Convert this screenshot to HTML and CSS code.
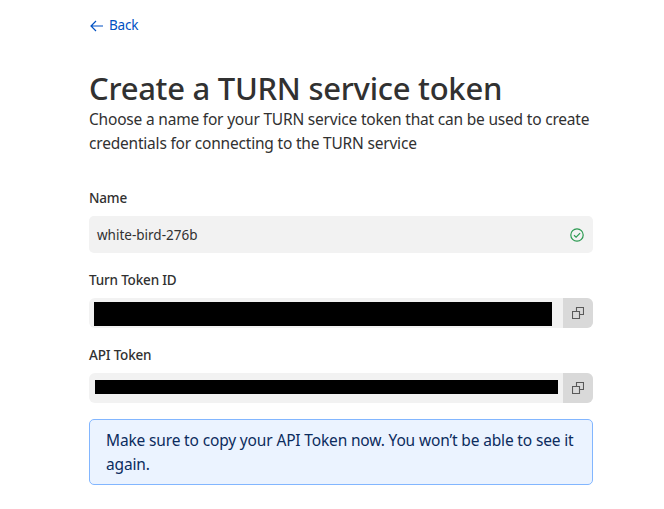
FILE: index.html
```html
<!DOCTYPE html>
<html lang="en">
<head>
  <meta charset="UTF-8" />
  <meta name="viewport" content="width=device-width, initial-scale=1.0"/>
  <title>Create a TURN service token</title>
  <link rel="stylesheet" href="styles.css">
</head>
<body>

  <main class="page">
    <a class="back" href="#">
      <svg width="14" height="12" viewBox="0 0 14 12" fill="none" stroke="currentColor" stroke-width="1.2">
        <path d="M6 1 1 6l5 5M1 6H13"/>
      </svg>
      <span>Back</span>
    </a>

    <h1>Create a TURN service token</h1>
    <p class="intro">
      Choose a name for your TURN service token that can be used to create<br>
      credentials for connecting to the TURN service
    </p>

    <!-- Name -->
    <div class="field field-name">
      <div class="label">Name</div>
      <div class="input">
        <span class="value">white-bird-276b</span>
        <svg class="check" width="14" height="14" viewBox="0 0 14 14" fill="none" stroke="currentColor" stroke-width="1.2">
          <circle cx="7" cy="7" r="6.2"/>
          <path d="M4 7.2 6.1 9.2 10.1 5.1"/>
        </svg>
      </div>
    </div>

    <!-- Token ID -->
    <div class="field field-id">
      <div class="label">Turn Token ID</div>
      <div class="secret">
        <div class="secret-value"><span class="mask mask-id"></span></div>
        <button class="copy" aria-label="Copy">
          <svg width="12" height="12" viewBox="0 0 12 12" fill="none" stroke="currentColor" stroke-width="1.1">
            <path d="M.5 4.5h7v7h-7zM4.5 4.5v-4h7v7h-4"/>
          </svg>
        </button>
      </div>
    </div>

    <!-- API Token -->
    <div class="field field-api">
      <div class="label">API Token</div>
      <div class="secret">
        <div class="secret-value"><span class="mask mask-api"></span></div>
        <button class="copy" aria-label="Copy">
          <svg width="12" height="12" viewBox="0 0 12 12" fill="none" stroke="currentColor" stroke-width="1.1">
            <path d="M.5 4.5h7v7h-7zM4.5 4.5v-4h7v7h-4"/>
          </svg>
        </button>
      </div>
    </div>

    <div class="notice">
      Make sure to copy your API Token now. You won’t be able to see it<br>
      again.
    </div>
  </main>

</body>
</html>
```

FILE: styles.css
```css
:root {
  --text: #313131;
  --link: #0051c3;
  --field-bg: #f2f2f2;
  --copy-bg: #d9d9d9;
  --notice-bg: #ebf3ff;
  --notice-border: #82b6ff;
  --notice-text: #0c2c5e;
}

* {
  margin: 0;
  padding: 0;
  box-sizing: border-box;
}

body {
  background: #fff;
  color: var(--text);
  font-family: "Segoe UI", "Noto Sans", "Open Sans", sans-serif;
  font-size: 15.5px;
  line-height: 24px;
}

.page {
  width: 504px;
  margin-left: 89px;
  padding-top: 16px;
}

.back {
  display: flex;
  align-items: center;
  gap: 5px;
  height: 20px;
  padding-left: 1px;
  font-size: 13.5px;
  line-height: 18px;
  letter-spacing: -0.2px;
  color: var(--link);
  text-decoration: none;
}

.back span {
  margin-top: -2px;
}

h1 {
  margin-top: 33px;
  font-size: 31px;
  font-weight: 550;
  line-height: 39px;
  letter-spacing: -0.27px;
  white-space: nowrap;
}

.intro {
  margin-top: -1px;
  letter-spacing: -0.2px;
  white-space: nowrap;
}

.label {
  font-size: 13.5px;
  font-weight: 550;
  line-height: 20px;
  letter-spacing: -0.18px;
}

.field-name {
  margin-top: 33px;
}

.field-id {
  margin-top: 17px;
}

.field-api {
  margin-top: 17px;
}

.input {
  display: flex;
  align-items: center;
  justify-content: space-between;
  height: 37px;
  margin-top: 8px;
  padding: 0 9px 0 8px;
  border-radius: 5px;
  background: var(--field-bg);
  font-size: 13.5px;
}

.check {
  color: #2b9a51;
}

.secret {
  display: flex;
  height: 30px;
  margin-top: 8px;
  border-radius: 6px;
  background: var(--field-bg);
  overflow: hidden;
}

.secret-value {
  flex: 1;
}

.mask {
  display: block;
  background: #000;
}

.mask-id {
  width: 458px;
  height: 24px;
  margin: 4px 0 0 5px;
}

.mask-api {
  width: 463px;
  height: 14px;
  margin: 7px 0 0 6px;
}

.copy {
  display: flex;
  align-items: center;
  justify-content: center;
  width: 30px;
  border: none;
  background: var(--copy-bg);
  color: #595959;
}

.notice {
  height: 66px;
  margin-top: 16px;
  padding: 8px 16px;
  border: 1px solid var(--notice-border);
  border-radius: 5px;
  background: var(--notice-bg);
  color: var(--notice-text);
  letter-spacing: -0.155px;
  white-space: nowrap;
}
```
